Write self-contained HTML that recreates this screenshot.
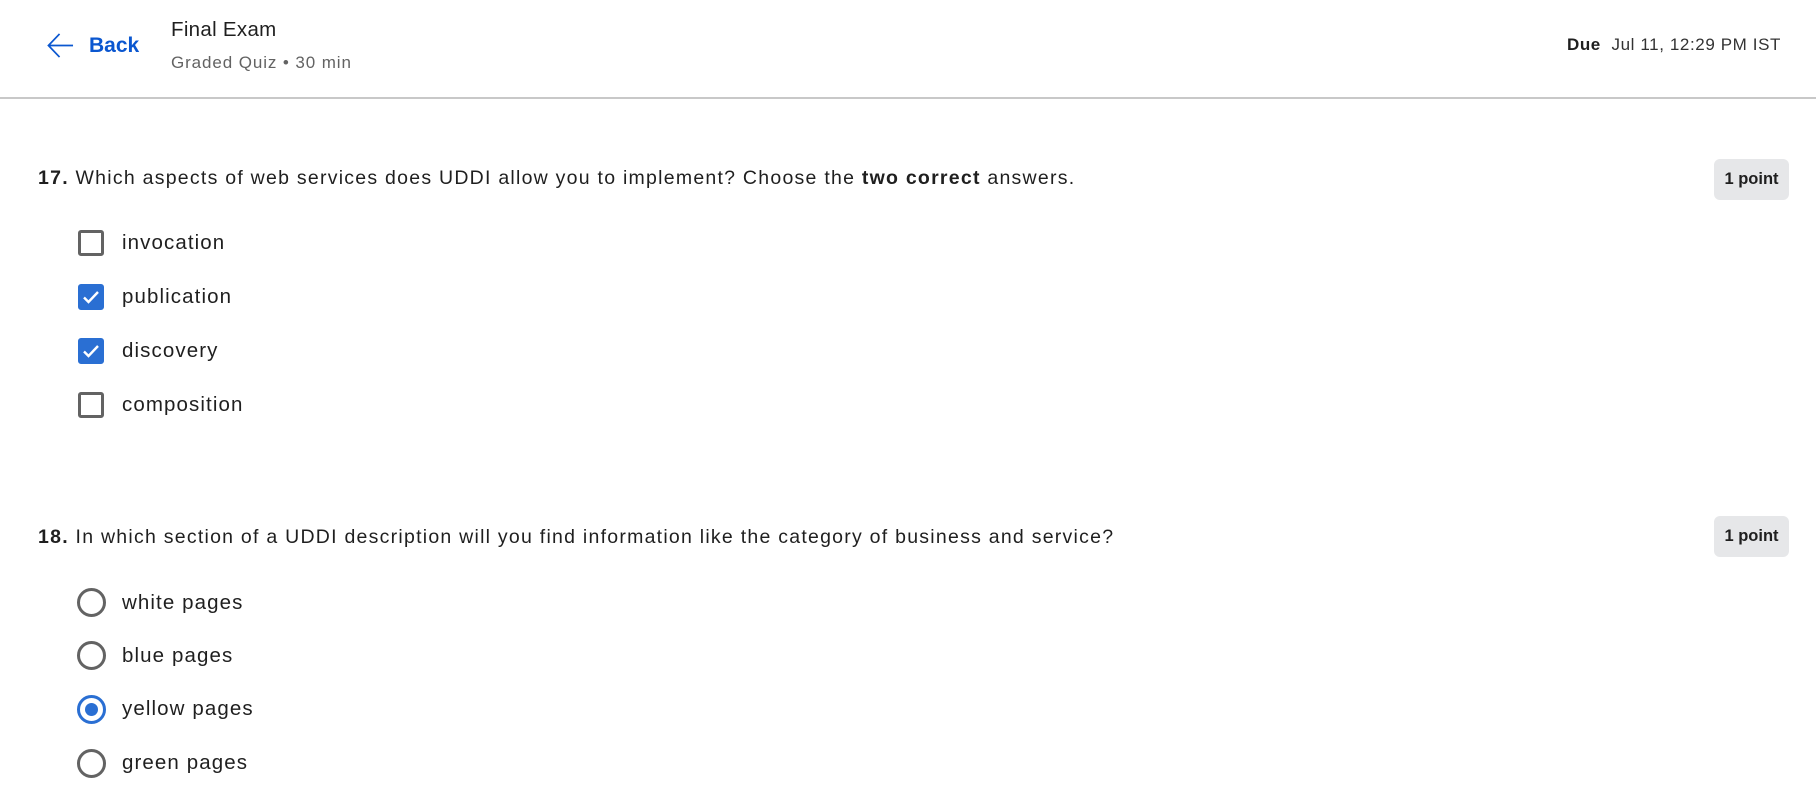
<!DOCTYPE html>
<html><head><meta charset="utf-8"><style>
*{margin:0;padding:0;box-sizing:border-box}
body{width:1816px;height:796px;background:#fff;font-family:"Liberation Sans",sans-serif;color:#1f1f1f;position:relative;overflow:hidden}
.a{position:absolute;white-space:nowrap}
.hdr{position:absolute;left:0;top:0;width:1816px;height:99px;border-bottom:2px solid #c8c8c8}
.q{font-size:19.5px;color:#1f1f1f;letter-spacing:1.25px}
.badge{position:absolute;width:75px;height:41px;background:#e6e7e9;border-radius:6px;font-size:16.5px;font-weight:bold;text-align:center;line-height:41px;color:#1f1f1f}
.cb{position:absolute;left:78px;width:26px;height:26px;border:3px solid #636363;border-radius:3px}
.cb.on{background:#2a6fd3;border-color:#2a6fd3}
.rd{position:absolute;left:77px;width:29px;height:29px;border:3px solid #636363;border-radius:50%}
.rd.on{border-color:#2a6fd3}
.rd.on::after{content:"";position:absolute;left:5px;top:5px;width:13px;height:13px;border-radius:50%;background:#2a6fd3}
.lbl{position:absolute;left:122px;font-size:20.5px;color:#1f1f1f;white-space:nowrap;transform:translateY(-50%);letter-spacing:1.1px}
</style></head><body>
<div class="hdr"></div>
<svg class="a" style="left:47px;top:32px" width="27" height="27" viewBox="0 0 28 28"><path d="M27 14H2M13 2L1.5 14L13 26" fill="none" stroke="#0b57d0" stroke-width="1.8"/></svg>
<div class="a" style="left:89px;top:34px;font-size:21px;font-weight:bold;color:#0b57d0">Back</div>
<div class="a" style="left:171px;top:18px;font-size:20.5px;color:#1f1f1f;letter-spacing:0.3px">Final Exam</div>
<div class="a" style="left:171px;top:53px;font-size:17px;color:#636363;letter-spacing:0.9px">Graded Quiz • 30 min</div>
<div class="a" style="right:35px;top:35px;font-size:17px;color:#333;letter-spacing:0.6px"><b style="color:#1f1f1f">Due</b>&nbsp; Jul 11, 12:29 PM IST</div>

<div class="a q" style="left:38px;top:167px"><b>17.</b> Which aspects of web services does UDDI allow you to implement? Choose the <b>two correct</b> answers.</div>
<div class="badge" style="left:1714px;top:159px">1 point</div>
<div class="cb" style="top:230px"></div><div class="lbl" style="top:243px">invocation</div>
<div class="cb on" style="top:284px"><svg width="20" height="20" viewBox="0 0 20 20" style="position:absolute;left:0;top:0"><path d="M3 10.5l4.5 4.5L17 5" fill="none" stroke="#fff" stroke-width="2.4"/></svg></div><div class="lbl" style="top:297px">publication</div>
<div class="cb on" style="top:338px"><svg width="20" height="20" viewBox="0 0 20 20" style="position:absolute;left:0;top:0"><path d="M3 10.5l4.5 4.5L17 5" fill="none" stroke="#fff" stroke-width="2.4"/></svg></div><div class="lbl" style="top:351px">discovery</div>
<div class="cb" style="top:392px"></div><div class="lbl" style="top:405px">composition</div>

<div class="a q" style="left:38px;top:526px"><b>18.</b> In which section of a UDDI description will you find information like the category of business and service?</div>
<div class="badge" style="left:1714px;top:516px">1 point</div>
<div class="rd" style="top:588px"></div><div class="lbl" style="top:603px">white pages</div>
<div class="rd" style="top:641px"></div><div class="lbl" style="top:656px">blue pages</div>
<div class="rd on" style="top:695px"></div><div class="lbl" style="top:709px">yellow pages</div>
<div class="rd" style="top:749px"></div><div class="lbl" style="top:763px">green pages</div>
</body></html>
